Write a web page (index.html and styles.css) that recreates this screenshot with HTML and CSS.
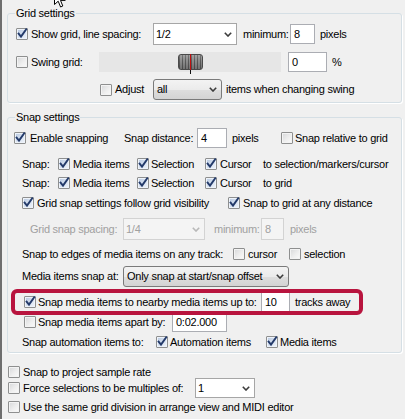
FILE: index.html
```html
<!DOCTYPE html>
<html>
<head>
<meta charset="utf-8">
<title>Snap/Grid settings</title>
<link rel="stylesheet" href="styles.css">
</head>
<body>
<div class="window">

  <section class="group grid">
    <div class="group-title">Grid settings</div>
    <div class="row gr1">
      <span class="cb checked"><svg class="tick" viewBox="0 0 10 10"><path d="M1.6 4.6 L4 7.6 L9.2 0.2"/></svg></span>
      <span class="lbl ml3 w-showgrid">Show grid, line spacing:</span>
      <div class="combo c-spacing"><span>1/2</span><svg class="chev" viewBox="0 0 8 5"><path d="M0.8 0.8 L4 4 L7.2 0.8"/></svg></div>
      <span class="lbl w-min1">minimum:</span>
      <div class="input i-min">8</div>
      <span class="lbl ml5">pixels</span>
    </div>
    <div class="row gr2">
      <span class="cb"></span>
      <span class="lbl ml3 w-swing">Swing grid:</span>
      <div class="slider"><div class="thumb"></div></div>
      <div class="input i-swing">0</div>
      <span class="lbl ml5">%</span>
    </div>
    <div class="row gr3">
      <span class="cb"></span>
      <span class="lbl ml3 w-adjust">Adjust</span>
      <div class="combo list c-adjust"><span>all</span><svg class="chev" viewBox="0 0 8 5"><path d="M0.8 0.8 L4 4 L7.2 0.8"/></svg></div>
      <span class="lbl ml4">items when changing swing</span>
    </div>
  </section>

  <section class="group snap">
    <div class="group-title">Snap settings</div>
    <div class="row sr1">
      <span class="cb checked"><svg class="tick" viewBox="0 0 10 10"><path d="M1.6 4.6 L4 7.6 L9.2 0.2"/></svg></span>
      <span class="lbl ml4 w-enable">Enable snapping</span>
      <span class="lbl w-dist">Snap distance:</span>
      <div class="input i-dist">4</div>
      <span class="lbl ml5 w-px2">pixels</span>
      <span class="cb"></span>
      <span class="lbl ml2">Snap relative to grid</span>
    </div>
    <div class="row sr2">
      <span class="lbl w-snap">Snap:</span>
      <span class="cb checked"><svg class="tick" viewBox="0 0 10 10"><path d="M1.6 4.6 L4 7.6 L9.2 0.2"/></svg></span>
      <span class="lbl ml3 w-media">Media items</span>
      <span class="cb checked"><svg class="tick" viewBox="0 0 10 10"><path d="M1.6 4.6 L4 7.6 L9.2 0.2"/></svg></span>
      <span class="lbl ml2 w-sel">Selection</span>
      <span class="cb checked"><svg class="tick" viewBox="0 0 10 10"><path d="M1.6 4.6 L4 7.6 L9.2 0.2"/></svg></span>
      <span class="lbl ml3 w-cursor">Cursor</span>
      <span class="lbl">to selection/markers/cursor</span>
    </div>
    <div class="row sr3">
      <span class="lbl w-snap">Snap:</span>
      <span class="cb checked"><svg class="tick" viewBox="0 0 10 10"><path d="M1.6 4.6 L4 7.6 L9.2 0.2"/></svg></span>
      <span class="lbl ml3 w-media">Media items</span>
      <span class="cb checked"><svg class="tick" viewBox="0 0 10 10"><path d="M1.6 4.6 L4 7.6 L9.2 0.2"/></svg></span>
      <span class="lbl ml2 w-sel">Selection</span>
      <span class="cb checked"><svg class="tick" viewBox="0 0 10 10"><path d="M1.6 4.6 L4 7.6 L9.2 0.2"/></svg></span>
      <span class="lbl ml3 w-cursor">Cursor</span>
      <span class="lbl">to grid</span>
    </div>
    <div class="row sr4">
      <span class="cb checked"><svg class="tick" viewBox="0 0 10 10"><path d="M1.6 4.6 L4 7.6 L9.2 0.2"/></svg></span>
      <span class="lbl ml3 w-follow">Grid snap settings follow grid visibility</span>
      <span class="cb checked"><svg class="tick" viewBox="0 0 10 10"><path d="M1.6 4.6 L4 7.6 L9.2 0.2"/></svg></span>
      <span class="lbl ml3">Snap to grid at any distance</span>
    </div>
    <div class="row sr5">
      <span class="lbl dis w-gss">Grid snap spacing:</span>
      <div class="combo disabled c-gss"><span>1/4</span><svg class="chev" viewBox="0 0 8 5"><path d="M0.8 0.8 L4 4 L7.2 0.8"/></svg></div>
      <span class="lbl dis ml9 w-min2">minimum:</span>
      <div class="input disabled i-min2">8</div>
      <span class="lbl dis ml6">pixels</span>
    </div>
    <div class="row sr6">
      <span class="lbl w-edges">Snap to edges of media items on any track:</span>
      <span class="cb"></span>
      <span class="lbl ml3 w-cur2">cursor</span>
      <span class="cb"></span>
      <span class="lbl ml3">selection</span>
    </div>
    <div class="row sr7">
      <span class="lbl w-snapat">Media items snap at:</span>
      <div class="combo list c-snapat"><span>Only snap at start/snap offset</span><svg class="chev" viewBox="0 0 8 5"><path d="M0.8 0.8 L4 4 L7.2 0.8"/></svg></div>
    </div>
    <div class="row sr8">
      <span class="cb checked"><svg class="tick" viewBox="0 0 10 10"><path d="M1.6 4.6 L4 7.6 L9.2 0.2"/></svg></span>
      <span class="lbl ml2 w-nearby">Snap media items to nearby media items up to:</span>
      <div class="input i-tracks">10</div>
      <span class="lbl ml5">tracks away</span>
    </div>
    <div class="row sr9">
      <span class="cb"></span>
      <span class="lbl ml2 w-apart">Snap media items apart by:</span>
      <div class="input i-apart">0:02.000</div>
    </div>
    <div class="row sr10">
      <span class="lbl w-auto">Snap automation items to:</span>
      <span class="cb checked"><svg class="tick" viewBox="0 0 10 10"><path d="M1.6 4.6 L4 7.6 L9.2 0.2"/></svg></span>
      <span class="lbl ml2 w-autoitems">Automation items</span>
      <span class="cb checked"><svg class="tick" viewBox="0 0 10 10"><path d="M1.6 4.6 L4 7.6 L9.2 0.2"/></svg></span>
      <span class="lbl ml2">Media items</span>
    </div>
  </section>

  <div class="row or1">
    <span class="cb"></span>
    <span class="lbl ml3">Snap to project sample rate</span>
  </div>
  <div class="row or2">
    <span class="cb"></span>
    <span class="lbl ml3 w-force">Force selections to be multiples of:</span>
    <div class="combo c-mult"><span>1</span><svg class="chev" viewBox="0 0 8 5"><path d="M0.8 0.8 L4 4 L7.2 0.8"/></svg></div>
  </div>
  <div class="row or3">
    <span class="cb"></span>
    <span class="lbl ml3">Use the same grid division in arrange view and MIDI editor</span>
  </div>

  <div class="highlight"></div>
  <svg class="cursor" width="13" height="20" viewBox="0 0 13 20"><path d="M0.5 0.5 V15.5 L4.2 12.2 L6.6 18 L8.8 17 L6.5 11.4 H11.2 Z" fill="#fff" stroke="#000" stroke-width="1"/></svg>
</div>
</body>
</html>
```

FILE: styles.css
```css
* { box-sizing: border-box; }

html, body {
  margin: 0;
  padding: 0;
}

body {
  width: 405px;
  height: 419px;
  overflow: hidden;
  background: #f0f0f0;
  font-family: "Liberation Sans", Arial, sans-serif;
  font-size: 11px;
  line-height: 13px;
  letter-spacing: -0.25px;
  color: #000;
}

.window {
  position: relative;
  height: 419px;
  border-left: 2px solid #6e6e6e;
  padding: 13px 0 0 5px;
}

/* group boxes */
.group {
  width: 395px;
  border: 1px solid #d5dfe5;
  border-radius: 3px;
  box-shadow: 1px 1px 0 #ffffff;
}
.group.grid { padding-bottom: 2px; }
.group.snap { margin-top: 14px; padding-bottom: 1px; }

.group-title {
  width: max-content;
  height: 13px;
  margin: -7px 0 0 7px;
  padding: 0 1px;
  background: #f0f0f0;
}

/* rows */
.row {
  display: flex;
  align-items: center;
  white-space: nowrap;
}
.gr1 { margin-top: 3px; height: 22px; padding-left: 8px; }
.gr2 { margin-top: 7px; height: 20px; padding-left: 8px; }
.gr3 { margin-top: 7px; height: 21px; padding-left: 92px; }

.sr1 { margin-top: 4px; height: 20px; padding-left: 6px; }
.sr2 { margin-top: 7px; height: 18px; padding-left: 14px; }
.sr3 { margin-top: 1px; height: 18px; padding-left: 14px; }
.sr4 { margin-top: 2px; height: 18px; padding-left: 14px; }
.sr5 { margin-top: 6px; height: 22px; padding-left: 22px; }
.sr6 { margin-top: 5px; height: 18px; padding-left: 14px; }
.sr7 { margin-top: 3px; height: 21px; padding-left: 14px; }
.sr8 { margin-top: 5px; height: 20px; padding-left: 16px; }
.sr9 { margin-top: 0; height: 20px; padding-left: 16px; }
.sr10 { margin-top: 1px; height: 18px; padding-left: 14px; }

.or1 { margin-top: 13px; height: 12px; padding-left: 1px; }
.or2 { margin-top: 0; height: 20px; padding-left: 1px; }
.or3 { margin-top: 3px; height: 12px; padding-left: 1px; }

/* labels */
.lbl { flex: none; display: block; height: 13px; }
.lbl.dis { color: #a0a0a0; }
.ml2 { margin-left: 2px; }
.ml3 { margin-left: 3px; }
.ml4 { margin-left: 4px; }
.ml5 { margin-left: 5px; }
.ml6 { margin-left: 6px; }
.ml9 { margin-left: 9px; }

.w-showgrid { width: 122px; }
.w-min1 { margin-left: 6px; width: 47px; }
.w-swing { width: 68px; }
.w-adjust { width: 38px; }
.w-enable { width: 94px; }
.w-dist { width: 73px; }
.w-px2 { width: 49px; }
.w-snap { width: 36px; }
.w-media { width: 64px; }
.w-sel { width: 54px; }
.w-cursor { width: 43px; }
.w-follow { width: 191px; }
.w-gss { width: 93px; }
.w-min2 { width: 47px; }
.w-edges { width: 211px; }
.w-cur2 { width: 41px; }
.w-snapat { width: 101px; }
.w-nearby { width: 223px; }
.w-apart { width: 134px; }
.w-auto { width: 134px; }
.w-autoitems { width: 96px; }
.w-force { width: 172px; }

/* checkboxes */
.cb {
  flex: none;
  display: block;
  width: 12px;
  height: 12px;
  border: 1px solid #8e8f8f;
  border-radius: 1px;
  background: linear-gradient(135deg, #d6d7d9 0%, #eeeeee 55%, #fbfbfb 100%);
  box-shadow: inset 0 0 0 1px #f3f3f3;
}
.cb.checked {
  background: linear-gradient(135deg, #b6c7e0 0%, #d9e3f1 55%, #f1f5fb 100%);
  box-shadow: inset 0 0 0 1px #eef3fa;
}
.tick {
  display: block;
  width: 10px;
  height: 10px;
  overflow: visible;
}
.tick path {
  fill: none;
  stroke: #233a6a;
  stroke-width: 1.9;
  stroke-linecap: square;
  stroke-linejoin: miter;
}

/* combo boxes */
.combo {
  flex: none;
  display: flex;
  align-items: center;
  justify-content: space-between;
  height: 22px;
  border: 1px solid #a6a6a6;
  background: #ffffff;
  padding: 0 4px 0 2px;
}
.combo.list {
  background: linear-gradient(#f3f3f3 0%, #ebebeb 50%, #dedede 51%, #d3d3d3 100%);
  border-color: #7a7a7a;
  border-radius: 3px;
  padding-left: 3px;
}
.combo.disabled {
  background: #f4f4f4;
  border-color: #d3d3d3;
  color: #a0a0a0;
}
.chev {
  display: block;
  width: 8px;
  height: 5px;
}
.chev path {
  fill: none;
  stroke: #3c3c3c;
  stroke-width: 1.6;
}
.combo.disabled .chev path { stroke: #b8b8b8; }

.c-spacing { width: 84px; height: 22px; }
.c-adjust { width: 69px; height: 21px; }
.c-gss { width: 82px; height: 22px; }
.c-snapat { width: 166px; height: 21px; }
.c-mult { width: 60px; height: 20px; }

/* text inputs */
.input {
  flex: none;
  display: flex;
  align-items: center;
  height: 20px;
  border: 1px solid #abadb3;
  background: #ffffff;
  padding: 0 3px;
}
.input.disabled {
  background: #f4f4f4;
  border-color: #d3d3d3;
  color: #a0a0a0;
}
.i-min { width: 25px; }
.i-swing { margin-left: 7px; width: 39px; }
.i-dist { width: 30px; }
.i-min2 { width: 23px; height: 22px; }
.i-tracks { width: 29px; }
.i-apart { width: 55px; }

/* swing slider */
.slider {
  flex: none;
  display: flex;
  align-items: center;
  width: 182px;
  height: 20px;
  background: #e6e6e6;
  padding-left: 79px;
}
.thumb {
  position: relative;
  width: 25px;
  height: 16px;
  border: 1px solid #4a4a4a;
  border-radius: 3px;
  background:
    linear-gradient(rgba(255,255,255,0.18), rgba(0,0,0,0) 40%, rgba(0,0,0,0.2)),
    repeating-linear-gradient(90deg, #5b5b5b 0 1px, #8e8e8e 1px 3px);
}
.thumb::after {
  content: "";
  position: absolute;
  left: 11px;
  top: -1px;
  width: 1px;
  height: 20px;
  background: linear-gradient(#c01010 0 16px, #111 16px);
}

/* annotation overlay */
.highlight {
  position: absolute;
  left: 9px;
  top: 289px;
  width: 352px;
  height: 26px;
  border: 4px solid #b8143e;
  border-radius: 6px;
}
.cursor {
  position: absolute;
  left: 52px;
  top: -11px;
}
```
